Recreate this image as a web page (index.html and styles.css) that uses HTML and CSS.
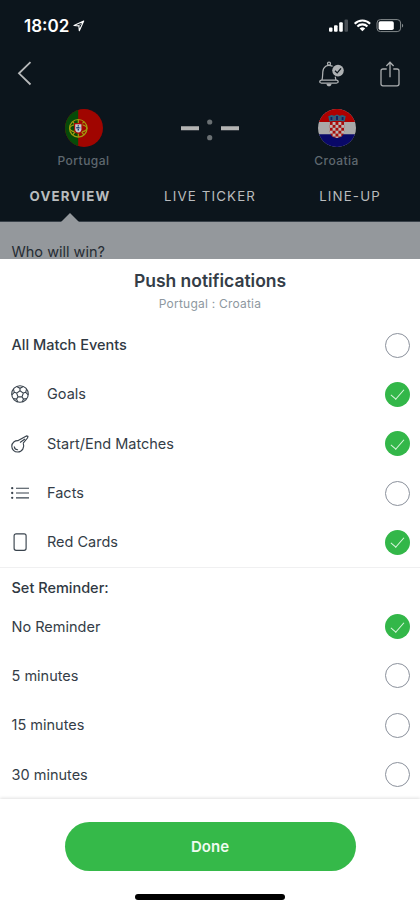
FILE: index.html
```html
<!DOCTYPE html>
<html lang="en">
<head>
<meta charset="utf-8">
<meta name="viewport" content="width=device-width, initial-scale=1">
<title>Push notifications</title>
<link rel="stylesheet" href="styles.css">
</head>
<body>
<div class="phone">
  <header class="match">
    <div class="status">
      <span class="clock">18:02</span>
      <svg class="location" width="12" height="12" viewBox="0 0 12 12"><path d="M1 5.5 10.7 1 6.3 10.8 5.9 5.9Z" fill="none" stroke="#fff" stroke-width="1.1" stroke-linejoin="round"/><path d="M5.9 5.9 10.7 1" stroke="#fff" stroke-width=".6"/></svg>
      <svg class="signals" width="76" height="14" viewBox="0 0 76 14">
        <g fill="#fff"><rect x="0" y="8.4" width="3.5" height="4.3" rx="1"/><rect x="5" y="6.2" width="3.6" height="6.5" rx="1"/><rect x="10.2" y="3.3" width="3.6" height="9.4" rx="1"/><rect x="15.5" y=".5" width="3.5" height="12.2" rx="1" opacity=".25"/></g>
        <g fill="none" stroke="#fff" stroke-width="2.1"><path d="M25.7 4.7A10.7 10.7 0 0 1 41.1 4.7M28.4 7.5A7 7 0 0 1 38.4 7.5"/></g>
        <path d="M30.6 9.5a4 4 0 0 1 5.6 0L33.4 12.3Z" fill="#fff"/>
        <rect x="48" y=".6" width="23.6" height="12" rx="3.4" fill="none" stroke="#858a8d" stroke-width="1"/>
        <rect x="49.6" y="2.2" width="15.2" height="8.8" rx="1.7" fill="#fff"/><path d="M73 4.7c1.6.7 1.6 3.2 0 3.9Z" fill="#858a8d"/>
      </svg>
    </div>
    <nav class="toolbar">
      <svg class="back" width="15" height="25" viewBox="0 0 15 25"><path d="M13.5 1.2 2 12.3 13.5 23.5" fill="none" stroke="#b7b9ba" stroke-width="1.8"/></svg>
      <svg class="bell" width="26" height="27" viewBox="0 0 26 27">
        <g fill="none" stroke="#aeb1b3" stroke-width="1.25" stroke-linecap="round" stroke-linejoin="round"><circle cx="10" cy="2.7" r="1.5"/><path d="M13.2 5.1C8.2 2.7 4.1 6 3.8 11c-.2 4-.2 6.4-.9 8.2M16.3 16.2l.6 3M2.3 19.2h15.4c2 .6 2 2.5 0 2.8H2.2c-2-.3-2-2.2.1-2.8Z"/></g>
        <path d="M7.4 22.7h5.2c-.3 3.4-4.9 3.4-5.2 0Z" fill="#aeb1b3"/>
        <circle cx="19" cy="9.6" r="5.8" fill="#aeb1b3"/><path d="m16 9.7 2.2 2.2 3.8-4.5" fill="none" stroke="#0c151c" stroke-width="1.3"/>
      </svg>
      <svg class="share" width="20" height="26" viewBox="0 0 20 26"><path d="M6.7 8H3Q1 8 1 10v13q0 1.8 2 1.8h14q2 0 2-1.8V10q0-2-2-2h-3.7M10 16.2V1.5M6.4 5 10 1.3 13.6 5" fill="none" stroke="#aaadaf" stroke-width="1.3"/></svg>
    </nav>
    <div class="teams">
      <div class="team">
        <svg width="38" height="38" viewBox="0 0 38 38"><defs><clipPath id="round"><circle cx="19" cy="19" r="19"/></clipPath></defs><g clip-path="url(#round)"><path fill="#a00500" d="M0 0h38v38H0z"/><path fill="#064b08" d="M0 0h13.2v38H0z"/></g><g fill="none" stroke="#a19a10" stroke-width="1.2"><circle cx="13.3" cy="19.3" r="8.8"/><ellipse cx="13.3" cy="19.3" rx="8.6" ry="4"/><path d="M13.3 10.5v17.6M7.6 12.7 19 25.9M19 12.7 7.6 25.9"/></g><path d="M9 14h8.6v7q-.5 3.8-4.3 3.8T9 21Z" fill="#a80b08"/><path d="M10.2 15.2h6.2v5.3q-.4 3-3.1 3t-3.1-3Z" fill="#c7c9cc"/><path d="M13.3 16.3v5.6M11.3 18.8h4" stroke="#163a74" stroke-width="1.4" stroke-dasharray="1.3 .6"/></svg>
        <span class="name">Portugal</span>
      </div>
      <svg class="score" width="60" height="22" viewBox="0 0 60 22"><path d="M1 9.2h18M41 9.2h18" stroke="#b5b5b4" stroke-width="4"/><g fill="#6a7073"><circle cx="29.7" cy="3" r="2.6"/><circle cx="29.7" cy="18.7" r="2.6"/></g></svg>
      <div class="team">
        <svg width="38" height="38" viewBox="0 0 38 38"><defs><pattern id="check" x="11.7" y="13" width="5.8" height="5.8" patternUnits="userSpaceOnUse"><path fill="#b9b5b4" d="M0 0h5.8v5.8H0z"/><path fill="#a70c0a" d="M0 0h2.9v2.9H0zM2.9 2.9h2.9v2.9H2.9z"/></pattern></defs><g clip-path="url(#round)"><path fill="#aaa9a9" d="M0 0h38v38H0z"/><path fill="#ae0000" d="M0 0h38v13H0z"/><path fill="#090868" d="M0 25.3h38V38H0z"/></g><path d="M11.7 13h14.5v9.4q-.8 6-7.2 6.6-6.5-.6-7.3-6.6Z" fill="url(#check)"/><path d="M10.3 7.2 13.6 6l2.7.8L19 5.4l2.7 1.4 2.7-.8 3.3 1.2-1.1 5.4q-7.6-1.7-15.2 0Z" fill="#25627f"/><path d="M13.4 8v3M19 7v4M24.6 8v3" stroke="#191a5c" stroke-width="1.8"/><path d="m15.4 10.5 2-2M21 10.5l1.6-1.8" stroke="#8b3549"/></svg>
        <span class="name">Croatia</span>
      </div>
    </div>
    <div class="tabs">
      <span class="tab active">OVERVIEW</span><span class="tab">LIVE TICKER</span><span class="tab">LINE-UP</span>
    </div>
  </header>
  <section class="question">Who will win?</section>
  <main class="sheet">
    <h1>Push notifications</h1>
    <p class="fixture">Portugal : Croatia</p>
    <div class="row strong"><span>All Match Events</span><i class="radio"></i></div>
    <div class="row">
      <svg class="icon" width="18" height="18" viewBox="0 0 18 18"><g fill="none" stroke="#39434d" stroke-width="1.1"><circle cx="9" cy="9" r="8.3"/><path d="m9 5.7 3.3 2.4-1.3 3.8H7L5.7 8.1ZM9 5.7V3.3M12.3 8.1l2.4-.8M11 11.9l1.5 2.2M7 11.9l-1.5 2.2M5.7 8.1l-2.4-.8M5.7 1.5 9 3.3l3.3-1.8M15.6 3.9l-.9 3.4 2.5 2.5M16 13.5l-3.5.6-1.3 2.8M6.8 16.9l-1.3-2.8-3.5-.6M.8 9.8l2.5-2.5-.9-3.4"/></g></svg>
      <span>Goals</span><i class="radio on"></i>
    </div>
    <div class="row">
      <svg class="icon" width="18" height="18" viewBox="0 0 18 18"><g fill="none" stroke="#39434d" stroke-width="1.15" stroke-linejoin="round"><path d="M12.2 8.1C14 12.4 11.2 17 6.8 17 3.2 17 .8 14.4.8 11.2.8 7.5 4 5.4 7.2 5.6L15.4.9 17 1.2 16.5 3 12.2 8.1M9 7.4 14 4"/><path d="M3.3 11.8c.3 1.8 1.5 2.8 3.3 2.9" stroke-linecap="round"/></g></svg>
      <span>Start/End Matches</span><i class="radio on"></i>
    </div>
    <div class="row">
      <svg class="icon" width="18" height="18" viewBox="0 0 18 18"><path d="M5 4.2h13M5 9h13M5 13.8h13" stroke="#39434d" stroke-width="1.15"/><g fill="#39434d"><circle cx="1.2" cy="4.2" r="1.15"/><circle cx="1.2" cy="9" r="1.15"/><circle cx="1.2" cy="13.8" r="1.15"/></g></svg>
      <span>Facts</span><i class="radio"></i>
    </div>
    <div class="row">
      <svg class="icon" width="18" height="18" viewBox="0 0 18 18"><rect x="3.1" y=".8" width="12" height="16.5" rx="2" fill="none" stroke="#39434d" stroke-width="1.15"/></svg>
      <span>Red Cards</span><i class="radio on"></i>
    </div>
    <h2>Set Reminder:</h2>
    <div class="row"><span>No Reminder</span><i class="radio on"></i></div>
    <div class="row"><span>5 minutes</span><i class="radio"></i></div>
    <div class="row"><span>15 minutes</span><i class="radio"></i></div>
    <div class="row"><span>30 minutes</span><i class="radio"></i></div>
    <footer>
      <button>Done</button>
      <div class="home"></div>
    </footer>
  </main>
</div>
</body>
</html>
```
FILE: styles.css
```css
* { box-sizing: border-box; }
body { margin: 0; font-family: Inter, Roboto, sans-serif; color: #343d47; background: #fff; }
svg { display: block; flex: none; }
.phone { width: 420px; height: 909px; overflow: hidden; display: flex; flex-direction: column; }
.match { height: 222px; flex: none; background: #0c151c; border-bottom: 1px solid #384149; }
.status { height: 52px; padding: 0 15px 0 24px; display: flex; align-items: center; }
.clock { font-size: 17px; font-weight: 600; color: #fff; line-height: 20px; }
.location { margin-left: 3.5px; }
.signals { margin-left: auto; }
.toolbar { height: 43px; padding: 0 20px 0 17px; display: flex; align-items: center; }
.bell { margin: 1px 0 0 auto; }
.share { margin: 0 0 0 35px; }
.teams { height: 75px; padding: 14px 33.5px 0; display: flex; justify-content: space-between; }
.team { width: 100px; display: flex; flex-direction: column; align-items: center; }
.name { margin-top: 5px; font-size: 12px; line-height: 17px; font-weight: 500; letter-spacing: .45px; color: #5f686f; }
.score { margin-top: 10px; }
.tabs { height: 51px; display: grid; grid-template-columns: repeat(3, 1fr); text-align: center; color: #b9bcbe; font-size: 13.3px; line-height: 17px; padding-top: 18px; letter-spacing: 1.15px; }
.tab { position: relative; white-space: nowrap; }
.tab.active { font-weight: 700; }
.tab.active::after { content: ""; position: absolute; left: 60.5px; top: 25px; border: 9px solid transparent; border-top: 0; border-bottom-color: #94989c; }
.question { height: 36.5px; flex: none; padding: 20px 0 0 11.5px; background: #94989c; font-size: 14.5px; line-height: 20px; color: #252c33; }
.sheet { flex: 1; position: relative; background: #fff; display: flex; flex-direction: column; }
h1 { margin: 11.5px 0 0; text-align: center; font-size: 17.5px; line-height: 22px; font-weight: 600; letter-spacing: -.02px; }
.fixture { margin: 3.5px 0 9px; text-align: center; font-size: 12px; line-height: 16px; color: #8e989f; letter-spacing: .22px; }
.row { height: 49.3px; flex: none; display: flex; align-items: center; padding: 0 10px 0 11.5px; font-size: 14.5px; line-height: 20px; }
.strong { font-weight: 500; color: #303943; }
.icon { margin: 0 18px 0 -.5px; }
.radio { width: 25px; height: 25px; margin-left: auto; border: 1px solid #8b919c; border-radius: 50%; display: flex; align-items: center; justify-content: center; }
.radio.on { border: 0; background: #33b749; }
.radio.on::after { content: ""; width: 5.5px; height: 12px; margin: -3px 0 0 0; border: solid #dcf7e0; border-width: 0 1.3px 1.3px 0; transform: rotate(41deg); }
h2 { height: 35px; flex: none; margin: 0; padding: 10px 11.5px 0; border-top: 1px solid #f0f0f1; font-size: 14.5px; line-height: 20px; font-weight: 500; color: #303943; }
footer { flex: 1; padding-top: 23px; display: flex; flex-direction: column; align-items: center; background: #fff; box-shadow: 0 -1px 3px rgba(0,0,0,.12); }
button { width: 291px; height: 49px; flex: none; padding: 0; border: 0; border-radius: 25px; background: #35b949; color: #effbf0; font: 600 15px Inter, sans-serif; }
.home { width: 150px; height: 6px; margin-top: 23px; border-radius: 3px; background: #000; }
```
